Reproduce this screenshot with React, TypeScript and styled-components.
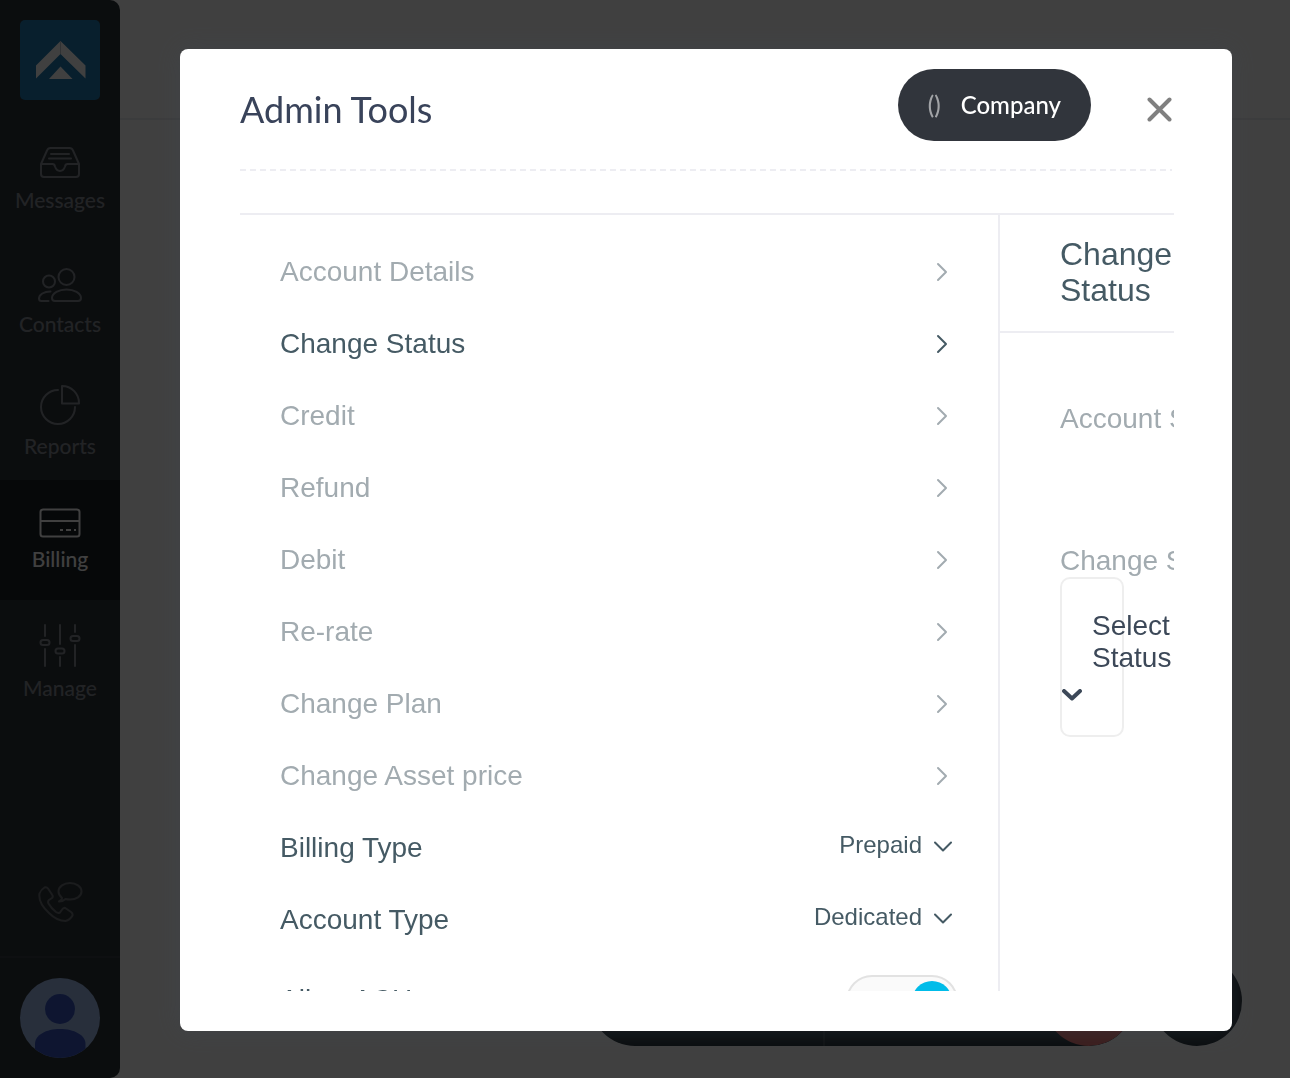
import React, { ReactNode } from "react";
import styled, { createGlobalStyle } from "styled-components";

const lato = `Lato, "Open Sans", sans-serif`;
const helvetica = `"Liberation Sans", Arial, sans-serif`;
const slate = "#455a64";
const rule = "#ededf2";

const GlobalStyle = createGlobalStyle`
  *, *::before, *::after { box-sizing: border-box; }
  html, body { margin: 0; height: 100%; overflow: hidden; }
  body { background: #fff; font-family: ${helvetica}; }
  button, select { font: inherit; color: inherit; border: 0; background: none; padding: 0; margin: 0; cursor: pointer; }
  svg { display: block; flex: none; }
`;

const Shell = styled.div`
  display: grid;
  grid-template-columns: 120px minmax(0, 1fr);
  height: 100vh;
`;

const Sidebar = styled.aside`
  display: flex;
  flex-direction: column;
  background: #2f353b;
  border-radius: 0 10px 10px 0;
  overflow: hidden;
`;

const LogoLink = styled.a`
  display: block;
  width: 80px;
  height: 80px;
  margin: 20px;
  border-radius: 5px;
  background: #227cb2;
`;

const Nav = styled.nav`
  display: flex;
  flex-direction: column;
`;

const NavLink = styled.a<{ $active?: boolean }>`
  display: flex;
  flex-direction: column;
  align-items: center;
  justify-content: center;
  gap: 9px;
  height: 120px;
  padding-bottom: 2px;
  color: ${(p) => (p.$active ? "#fff" : "#868c94")};
  background: ${(p) => (p.$active ? "#1b2025" : "transparent")};
  font: 500 21px/24px ${lato};
  text-decoration: none;
`;

const SidebarFooter = styled.div`
  display: flex;
  flex-direction: column;
  align-items: center;
  margin-top: auto;
`;

const SupportButton = styled.button`
  margin-bottom: 33px;
  color: #6b7076;
`;

const Account = styled.div`
  display: flex;
  justify-content: center;
  width: 100%;
  padding: 20px;
  border-top: 2px solid #3a3f46;
`;

const Avatar = styled.button`
  width: 80px;
  height: 80px;
  border-radius: 50%;
  overflow: hidden;
`;

const Page = styled.main`
  display: flex;
  flex-direction: column;
`;

const PageHeader = styled.header`
  height: 120px;
  border-bottom: 2px solid #eceef1;
`;

const Dock = styled.div`
  display: flex;
  justify-content: flex-end;
  gap: 18px;
  margin-top: auto;
  padding: 0 48px 32px;
`;

const CallBar = styled.div`
  display: flex;
  justify-content: space-between;
  width: 544px;
  border-radius: 45px;
  background: #28343c;
  overflow: hidden;
`;

const CallSegment = styled.div`
  width: 235px;
  border-right: 2px solid #3c474e;
`;

const RoundButton = styled.button<{ $color: string }>`
  width: 90px;
  height: 90px;
  border-radius: 50%;
  background: ${(p) => p.$color};
`;

const Overlay = styled.div`
  position: fixed;
  inset: 0;
  display: flex;
  padding: 49px 58px 47px 180px;
  background: rgba(0, 0, 0, 0.75);
`;

const Dialog = styled.section`
  display: flex;
  flex-direction: column;
  flex: 1;
  min-width: 0;
  padding: 0 58px 40px 60px;
  border-radius: 8px;
  background: #fff;
  box-shadow: 0 0 24px rgba(62, 70, 80, 0.4);
`;

const DialogHeader = styled.header`
  display: flex;
  align-items: center;
  height: 122px;
  margin-right: 2px;
  margin-bottom: 42px;
  padding-bottom: 2px;
  background: repeating-linear-gradient(90deg, ${rule} 0 6px, transparent 6px 10px) bottom / 100% 2px no-repeat;
`;

const DialogTitle = styled.h1`
  margin: 0 auto 0 0;
  color: #39435a;
  font: 400 36px/44px ${lato};
`;

const CompanyButton = styled.button`
  display: flex;
  align-items: center;
  gap: 20px;
  align-self: flex-start;
  height: 72px;
  margin: 20px 56px 0 0;
  padding: 0 30px;
  border-radius: 36px;
  background: #31353c;
  color: #fff;
  font: 500 24px/32px ${lato};
`;

const CompanyCode = styled.span`
  color: #a2a4a7;
`;

const CloseButton = styled.button`
  color: #808080;
`;

const DialogBody = styled.div`
  display: flex;
  flex: 1;
  min-height: 0;
  border-top: 2px solid ${rule};
  overflow: hidden;
`;

const Settings = styled.div`
  flex: 1;
  min-width: 0;
  padding: 21px 40px 0;
`;

const rowText = `
  display: flex;
  align-items: center;
  justify-content: space-between;
  width: 100%;
  font: 400 28px/32px ${helvetica};
`;

const MenuRow = styled.button<{ $active?: boolean }>`
  ${rowText}
  height: 72px;
  padding-right: 9px;
  color: ${(p) => (p.$active ? slate : "#a2abb0")};
  text-align: left;
`;

const FieldRow = styled.div<{ $tall?: boolean }>`
  ${rowText}
  height: ${(p) => (p.$tall ? 90 : 72)}px;
  color: ${slate};
`;

const SelectWrap = styled.span`
  display: flex;
  align-items: center;
  gap: 12px;
  padding: 0 6px 4px 0;
`;

const InlineSelect = styled.select`
  appearance: none;
  font-size: 24px;
  line-height: 32px;
  padding-bottom: 2px;
  text-align: right;
  text-align-last: right;
`;

const Toggle = styled.input`
  appearance: none;
  display: flex;
  justify-content: flex-end;
  width: 112px;
  height: 52px;
  margin: 0;
  padding: 4px;
  border: 2px solid #e2e2e2;
  border-radius: 26px;
  background: #fafafa;
  cursor: pointer;

  &::before {
    content: "";
    width: 40px;
    height: 40px;
    border-radius: 50%;
    background: #00bce9;
  }

  &:not(:checked) {
    justify-content: flex-start;
  }
`;

const ToggleLabel = styled.label`
  padding-bottom: 2px;
`;

const Panel = styled.section`
  width: 176px;
  border-left: 2px solid ${rule};
  overflow: hidden;
`;

const PanelTitle = styled.h2`
  margin: 0;
  padding: 21px 50px 23px 60px;
  border-bottom: 2px solid ${rule};
  color: ${slate};
  font: 400 32px/36px ${helvetica};
`;

const PanelBody = styled.div`
  display: flex;
  flex-direction: column;
  gap: 110px;
  padding: 70px 50px 0 60px;
`;

const PanelLabel = styled.div`
  color: #a2abb0;
  font-size: 28px;
  line-height: 32px;
  white-space: nowrap;
`;

const StatusButton = styled.button`
  display: flex;
  flex-direction: column;
  align-items: flex-start;
  width: 100%;
  padding: 31px 0 29px;
  border: 2px solid #eee;
  border-radius: 10px;
  color: #3c4858;
  font-size: 28px;
  line-height: 32px;
  text-align: left;
`;

const StatusText = styled.span`
  padding-left: 30px;
`;

const StatusArrow = styled.span`
  display: flex;
  align-items: center;
  height: 32px;
  padding-top: 10px;
`;

type IconProps = { w: number; h: number; stroke?: number; children: ReactNode };

const Icon = ({ w, h, stroke = 2, children }: IconProps) => (
  <svg
    width={w}
    height={h}
    viewBox={`0 0 ${w} ${h}`}
    fill="none"
    stroke="currentColor"
    strokeWidth={stroke}
    strokeLinecap="round"
    strokeLinejoin="round"
    aria-hidden="true"
  >
    {children}
  </svg>
);

const MessagesIcon = () => (
  <Icon w={42} h={33}>
    <path d="M2 18 8 4.500Q9 2 11.500 2H30.500Q33 2 34 4.500L40 18V28Q40 31 37 31H5Q2 31 2 28V18H13.500Q15.500 18 16 20.500Q17.500 25 21 25T26 20.500Q26.500 18 28.500 18H40M12 8H30M10 12.500H32" />
  </Icon>
);

const ContactsIcon = () => (
  <Icon w={46} h={40}>
    <circle cx="29.500" cy="14" r="8" />
    <circle cx="12" cy="18.500" r="6" />
    <path d="M18 38H41Q44 38 44 35C44 30 37 26.500 29.500 26.500S15 30 15 35Q15 38 18 38ZM13.500 28.500C7 28.500 2 31.500 2 35.500Q2 38 4.500 38H11.500" />
  </Icon>
);

const ReportsIcon = () => (
  <Icon w={42} h={44}>
    <path d="M19 9A17 17 0 1 0 36 26M23 22.500V5A17 17 0 0 1 40 22.500Z" />
  </Icon>
);

const BillingIcon = () => (
  <Icon w={42} h={30}>
    <rect x="1.500" y="1.500" width="39" height="27" rx="2.500" />
    <path d="M2 13H40" />
    <path d="M21 22H24M27 22H32M35 22H37" strokeLinecap="butt" />
  </Icon>
);

const ManageIcon = () => (
  <Icon w={42} h={49}>
    <path d="M6 7V18M6 31V48M21 7V26M21 39V48M36 7V14M36 27V48" />
    <rect x="1.500" y="22" width="9" height="5" rx="2.500" />
    <rect x="16.500" y="30.500" width="9" height="5" rx="2.500" />
    <rect x="31.500" y="18" width="9" height="5" rx="2.500" />
  </Icon>
);

const SupportIcon = () => (
  <Icon w={46} h={42}>
    <path d="M7.500 6.500Q4 8.500 2.500 12.500Q1 22 12 32Q20 40 28.500 40Q33 39 35.500 34.500Q36 32.500 34 31L29 27.500Q27 26 25.500 28L23 31.500Q21 32.500 19 31Q14 27 11.500 22.500Q10.500 20.500 12 19L15 17Q16.500 15.500 15 13.500L11 7.500Q9.500 5.500 7.500 6.500Z" />
    <path d="M22 20.500Q25 19 25 17Q21.500 14 21.500 10.500C21.500 5.500 27 2 33 2S44.500 5.500 44.500 10.500S39 18.500 33 18.500Q30.500 18.500 28.500 18Q26 20.500 22 20.500Z" />
  </Icon>
);

const ChevronRight = () => (
  <Icon w={14} h={20}>
    <path d="m3 2 8 8-8 8" />
  </Icon>
);

const ChevronDown = () => (
  <Icon w={18} h={11}>
    <path d="m1 1.500 8 8 8-8" />
  </Icon>
);

const navItems = [
  { label: "Messages", icon: <MessagesIcon /> },
  { label: "Contacts", icon: <ContactsIcon /> },
  { label: "Reports", icon: <ReportsIcon /> },
  { label: "Billing", icon: <BillingIcon />, active: true },
  { label: "Manage", icon: <ManageIcon /> },
];

const tools = [
  "Account Details",
  "Change Status",
  "Credit",
  "Refund",
  "Debit",
  "Re-rate",
  "Change Plan",
  "Change Asset price",
];

const fields = [
  { id: "billing-type", label: "Billing Type", value: "Prepaid" },
  { id: "account-type", label: "Account Type", value: "Dedicated" },
];

export default function App() {
  return (
    <>
      <GlobalStyle />
      <Shell>
        <Sidebar>
          <LogoLink href="#" aria-label="Home">
            <svg width="80" height="80" viewBox="0 0 80 80" fill="#fff" aria-hidden="true">
              <path d="M16 45.500 40.500 21 65.500 45.500V58.500L40.500 34 16 58.500Z" />
              <path d="M40.500 46.500 52.500 59H29Z" />
              <path d="M40.500 21V34" stroke="#c4ccd2" strokeWidth="1" />
            </svg>
          </LogoLink>
          <Nav>
            {navItems.map((item) => (
              <NavLink key={item.label} href="#" $active={item.active}>
                {item.icon}
                {item.label}
              </NavLink>
            ))}
          </Nav>
          <SidebarFooter>
            <SupportButton aria-label="Support">
              <SupportIcon />
            </SupportButton>
            <Account>
              <Avatar aria-label="Profile">
                <svg width="80" height="80" viewBox="0 0 80 80" aria-hidden="true">
                  <rect width="80" height="80" fill="#9fbcec" />
                  <circle cx="40" cy="31" r="15" fill="#3856c0" />
                  <path d="M15 80V66C15 57 26 51 40 51S65.500 57 65.500 66V80Z" fill="#3856c0" />
                </svg>
              </Avatar>
            </Account>
          </SidebarFooter>
        </Sidebar>
        <Page>
          <PageHeader />
          <Dock>
            <CallBar>
              <CallSegment />
              <RoundButton $color="#e87474" aria-label="End call" />
            </CallBar>
            <RoundButton $color="#28343c" aria-label="Dial pad" />
          </Dock>
        </Page>
      </Shell>
      <Overlay>
        <Dialog role="dialog" aria-labelledby="dialog-title">
          <DialogHeader>
            <DialogTitle id="dialog-title">Admin Tools</DialogTitle>
            <CompanyButton>
              <CompanyCode>()</CompanyCode>
              Company
            </CompanyButton>
            <CloseButton aria-label="Close">
              <Icon w={25} h={25} stroke={4}>
                <path d="m2.500 2.500 20 20m0-20-20 20" />
              </Icon>
            </CloseButton>
          </DialogHeader>
          <DialogBody>
            <Settings>
              {tools.map((tool) => (
                <MenuRow key={tool} $active={tool === "Change Status"}>
                  {tool}
                  <ChevronRight />
                </MenuRow>
              ))}
              {fields.map((field) => (
                <FieldRow key={field.id}>
                  <label htmlFor={field.id}>{field.label}</label>
                  <SelectWrap>
                    <InlineSelect id={field.id}>
                      <option>{field.value}</option>
                    </InlineSelect>
                    <ChevronDown />
                  </SelectWrap>
                </FieldRow>
              ))}
              <FieldRow $tall>
                <ToggleLabel htmlFor="allow-ach">Allow ACH</ToggleLabel>
                <Toggle id="allow-ach" type="checkbox" role="switch" defaultChecked />
              </FieldRow>
            </Settings>
            <Panel>
              <PanelTitle>Change Status</PanelTitle>
              <PanelBody>
                <PanelLabel>Account Status</PanelLabel>
                <div>
                  <PanelLabel id="status-label">Change Status</PanelLabel>
                  <StatusButton aria-haspopup="listbox" aria-labelledby="status-label">
                    <StatusText>Select Status</StatusText>
                    <StatusArrow>
                      <Icon w={20} h={12} stroke={4}>
                        <path d="m2 2 8 7.500L18 2" />
                      </Icon>
                    </StatusArrow>
                  </StatusButton>
                </div>
              </PanelBody>
            </Panel>
          </DialogBody>
        </Dialog>
      </Overlay>
    </>
  );
}
